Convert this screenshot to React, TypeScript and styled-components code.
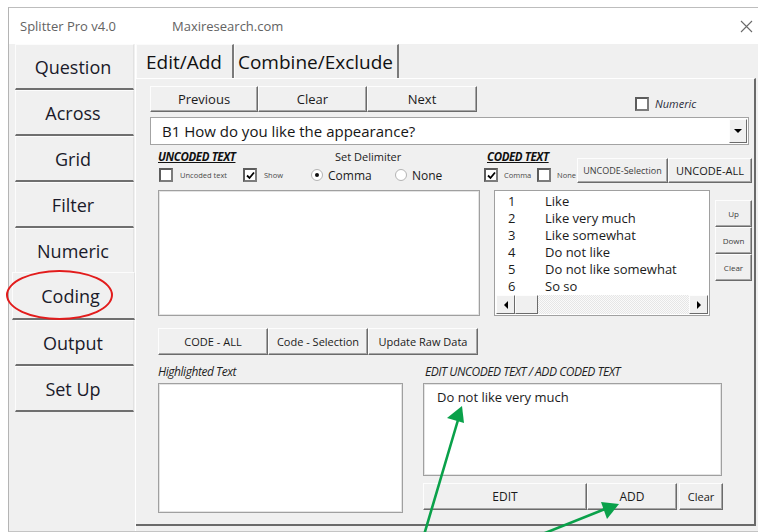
import React from "react";
import styled, { createGlobalStyle } from "styled-components";

const navItems = ["Question", "Across", "Grid", "Filter", "Numeric", "Coding", "Output", "Set Up"];

const codes = [
	["1", "Like"],
	["2", "Like very much"],
	["3", "Like somewhat"],
	["4", "Do not like"],
	["5", "Do not like somewhat"],
	["6", "So so"],
];

const Check = ({ checked }: { checked?: boolean }) => (
	<CheckBox>
		{checked && (
			<svg width="9" height="9" viewBox="0 0 9 9">
				<path d="M1 4.5 L3.5 7 L8 1.5" fill="none" stroke="#000" strokeWidth="1.8" />
			</svg>
		)}
	</CheckBox>
);

const Arrow = ({ dir }: { dir: "left" | "right" | "down" }) => {
	const pts = dir === "left" ? "5,0 5,8 1,4" : dir === "right" ? "1,0 1,8 5,4" : "0,1 8,1 4,5";
	return (
		<svg width={dir === "down" ? 8 : 6} height={dir === "down" ? 6 : 8} viewBox={dir === "down" ? "0 0 8 6" : "0 0 6 8"}>
			<polygon points={pts} fill="#000" />
		</svg>
	);
};

export default function App() {
	return (
		<>
			<GlobalStyle />
			<Desktop>
				<Window>
					<TitleBar>
						<TitleText $w={152}>Splitter Pro v4.0</TitleText>
						<TitleText>Maxiresearch.com</TitleText>
						<Close>
							<svg width="13" height="13" viewBox="0 0 13 13">
								<path d="M1 1 L12 12 M12 1 L1 12" stroke="#6a6a6a" strokeWidth="1.1" />
							</svg>
						</Close>
					</TitleBar>
					<Body>
						<Nav>
							{navItems.map((n) => (
								<NavButton key={n} $active={n === "Coding"}>
									{n}
									{n === "Coding" && <Ring />}
								</NavButton>
							))}
						</Nav>
						<Main>
							<TabStrip>
								<Tab $w={98}>Edit/Add</Tab>
								<Tab $w={165}>Combine/Exclude</Tab>
							</TabStrip>
							<TabPage>
								<TopRow>
									<Button $w={108} $h={26} $size={13}>Previous</Button>
									<Button $w={109} $h={26} $size={13}>Clear</Button>
									<Button $w={110} $h={26} $size={13}>Next</Button>
									<NumericOpt>
										<Check />
										<NumericLabel>Numeric</NumericLabel>
									</NumericOpt>
								</TopRow>

								<Combo>
									<ComboText>B1 How do you like the appearance?</ComboText>
									<DropButton>
										<Arrow dir="down" />
									</DropButton>
								</Combo>

								<OptionsRow>
									<UncodedOpts>
										<HeadRow>
											<SectionTitle $w={177}>UNCODED TEXT</SectionTitle>
											<DelimLabel>Set Delimiter</DelimLabel>
										</HeadRow>
										<ChoiceRow>
											<Choice $w={84} $ml={1}>
												<Check />
												<TinyLabel>Uncoded text</TinyLabel>
											</Choice>
											<Choice $w={68}>
												<Check checked />
												<TinyLabel>Show</TinyLabel>
											</Choice>
											<Choice $w={84}>
												<Radio $on />
												<RadioLabel>Comma</RadioLabel>
											</Choice>
											<Choice>
												<Radio />
												<RadioLabel>None</RadioLabel>
											</Choice>
										</ChoiceRow>
									</UncodedOpts>
									<CodedOpts>
										<HeadRow>
											<SectionTitle $ml={3}>CODED TEXT</SectionTitle>
										</HeadRow>
										<ChoiceRow>
											<Choice $w={53}>
												<Check checked />
												<TinyLabel $gap={6}>Comma</TinyLabel>
											</Choice>
											<Choice>
												<Check />
												<TinyLabel $gap={6}>None</TinyLabel>
											</Choice>
										</ChoiceRow>
									</CodedOpts>
									<UncodeButtons>
										<Button $w={91} $h={25} $size={9}>UNCODE-Selection</Button>
										<Button $w={84} $h={25} $size={11}>UNCODE-ALL</Button>
									</UncodeButtons>
								</OptionsRow>

								<ListsRow>
									<TextBox $w={322} $h={126} />
									<CodedList>
										<CodeRows>
											{codes.map(([num, label]) => (
												<CodeRow key={num}>
													<CodeNum>{num}</CodeNum>
													<span>{label}</span>
												</CodeRow>
											))}
										</CodeRows>
										<HScroll>
											<ScrollButton>
												<Arrow dir="left" />
											</ScrollButton>
											<ScrollThumb />
											<ScrollTrack />
											<ScrollButton>
												<Arrow dir="right" />
											</ScrollButton>
										</HScroll>
									</CodedList>
									<SideButtons>
										<Button $w={37} $h={27} $size={8}>Up</Button>
										<Button $w={37} $h={27} $size={8}>Down</Button>
										<Button $w={37} $h={27} $size={8}>Clear</Button>
									</SideButtons>
								</ListsRow>

								<ActionRow>
									<Button $w={110} $h={27} $size={11}>CODE - ALL</Button>
									<Button $w={100} $h={27} $size={11}>Code - Selection</Button>
									<Button $w={110} $h={27} $size={11}>Update Raw Data</Button>
								</ActionRow>

								<BottomRow>
									<Column $w={245} $mr={20}>
										<FieldLabel>Highlighted Text</FieldLabel>
										<TextBox $w={245} $h={130} />
									</Column>
									<Column $w={300}>
										<FieldLabel $ml={2}>EDIT UNCODED TEXT / ADD CODED TEXT</FieldLabel>
										<TextBox $w={299} $h={93}>
											<EditText>Do not like very much</EditText>
										</TextBox>
										<EditButtons>
											<Button $w={164} $h={27} $size={12}>EDIT</Button>
											<Button $w={90} $h={27} $size={12}>ADD</Button>
											<Button $w={44} $h={27} $size={11} $ml={2}>Clear</Button>
										</EditButtons>
									</Column>
								</BottomRow>
							</TabPage>
						</Main>
					</Body>
				</Window>

				{/* green call-out arrows */}
				<Callouts width="758" height="532" viewBox="0 0 758 532">
					<g stroke="#0aa14a" strokeWidth="2.6" fill="none" strokeLinecap="round">
						<line x1="424" y1="535" x2="458" y2="420" />
						<line x1="540" y1="535" x2="605" y2="509" />
					</g>
					<g fill="#0aa14a">
						<polygon points="462,406 447,418 464,423" />
						<polygon points="619,504 601,502 607,519" />
					</g>
				</Callouts>
			</Desktop>
		</>
	);
}

const GlobalStyle = createGlobalStyle`
* {
	box-sizing: border-box;
}
body {
	margin: 0;
	background: #fff;
	font-family: "Open Sans", "Noto Sans", sans-serif;
	color: #1b1b1b;
}
`;

const Desktop = styled.div`
position: relative;
width: 758px;
height: 532px;
overflow: hidden;
background: #fff;
padding: 7px 0 0 8px;
`;

const Window = styled.div`
width: 751px;
height: 525px;
display: flex;
flex-direction: column;
border-top: 1px solid #bdbdbd;
border-left: 1px solid #b4b4b4;
border-bottom: 1px solid #c4c4c4;
background: #f0f0f0;
`;

const TitleBar = styled.div`
height: 36px;
flex: none;
display: flex;
align-items: center;
padding: 0 6px 0 11px;
background: #fff;
`;

const TitleText = styled.span<{ $w?: number }>`
width: ${(p) => (p.$w ? `${p.$w}px` : "auto")};
font-size: 13px;
color: #636363;
`;

const Close = styled.span`
margin-left: auto;
display: flex;
padding-top: 1px;
`;

const Body = styled.div`
flex: 1;
display: flex;
min-height: 0;
`;

const Nav = styled.div`
width: 127px;
flex: none;
padding-left: 6px;
border-right: 1px solid #fff;
display: flex;
flex-direction: column;
`;

const NavButton = styled.div<{ $active?: boolean }>`
position: relative;
height: ${(p) => (p.$active ? 48 : 46)}px;
width: ${(p) => (p.$active ? 123 : 119)}px;
margin-left: ${(p) => (p.$active ? -3 : 0)}px;
margin-top: ${(p) => (p.$active ? -2 : 0)}px;
display: flex;
align-items: center;
justify-content: center;
padding-right: ${(p) => (p.$active ? 6 : 3)}px;
font-size: 18px;
color: #1a1a2a;
background: #f0f0f0;
border-top: 1px solid #fcfcfc;
border-left: 1px solid #fcfcfc;
border-right: 1px solid #e2e2e2;
border-bottom: 2px solid #6f6f6f;
`;

const Ring = styled.span`
position: absolute;
left: -7px;
top: -3px;
width: 107px;
height: 50px;
border: 2px solid #e21c1c;
border-radius: 50%;
`;

const Main = styled.div`
flex: 1;
display: flex;
flex-direction: column;
`;

const TabStrip = styled.div`
height: 34px;
flex: none;
display: flex;
`;

const Tab = styled.div<{ $w: number }>`
width: ${(p) => p.$w}px;
height: 34px;
display: flex;
align-items: center;
justify-content: center;
padding-right: 1px;
font-size: 19px;
color: #111;
border-top: 1px solid #fbfbfb;
border-left: 1px solid #fbfbfb;
border-right: 2px solid #7a7a7a;
`;

const TabPage = styled.div`
height: 448px;
flex: none;
margin-right: 3px;
padding: 7px 0 0 14px;
border-top: 1px solid #fff;
border-right: 2px solid #6a6a6a;
border-bottom: 2px solid #6a6a6a;
display: flex;
flex-direction: column;
`;

const Button = styled.button<{ $w: number; $h: number; $size: number; $ml?: number }>`
width: ${(p) => p.$w}px;
height: ${(p) => p.$h}px;
margin-left: ${(p) => p.$ml ?? 0}px;
flex: none;
padding: 0;
font-family: "Open Sans", "Noto Sans", sans-serif;
font-size: ${(p) => p.$size}px;
color: ${(p) => (p.$size < 10 ? "#3d3d3d" : "#1b1b1b")};
white-space: nowrap;
background: #f0f0f0;
border: 1px solid;
border-color: #fdfdfd #6b6b6b #6b6b6b #fdfdfd;
box-shadow: inset -1px -1px 0 #a6a6a6;
`;

const TopRow = styled.div`
display: flex;
align-items: flex-start;
height: 26px;
`;

const NumericOpt = styled.div`
display: flex;
align-items: center;
margin: 10px 0 0 158px;
`;

const NumericLabel = styled.span`
margin-left: 6px;
font-size: 11px;
font-style: italic;
color: #2a2a3a;
`;

const CheckBox = styled.span`
width: 14px;
height: 14px;
flex: none;
display: flex;
align-items: center;
justify-content: center;
background: #fff;
border: 2px solid;
border-color: #5c5c5c #7c7c7c #7c7c7c #5c5c5c;
`;

const Combo = styled.div`
margin-top: 5px;
width: 599px;
height: 28px;
display: flex;
align-items: center;
background: #fff;
border: 1px solid #a3a3a3;
padding-right: 1px;
`;

const ComboText = styled.span`
flex: 1;
padding-left: 11px;
font-size: 15px;
color: #161616;
`;

const DropButton = styled.span`
width: 18px;
height: 24px;
display: flex;
align-items: center;
justify-content: center;
background: #f0f0f0;
border: 1px solid;
border-color: #fdfdfd #6b6b6b #6b6b6b #fdfdfd;
`;

const OptionsRow = styled.div`
margin-top: 5px;
padding-left: 8px;
height: 34px;
display: flex;
`;

const UncodedOpts = styled.div`
width: 326px;
display: flex;
flex-direction: column;
`;

const CodedOpts = styled.div`
width: 93px;
display: flex;
flex-direction: column;
`;

const HeadRow = styled.div`
height: 13px;
display: flex;
align-items: center;
`;

const SectionTitle = styled.span<{ $w?: number; $ml?: number }>`
width: ${(p) => (p.$w ? `${p.$w}px` : "auto")};
margin-left: ${(p) => p.$ml ?? 0}px;
font-size: 11.5px;
font-weight: 700;
font-style: italic;
text-decoration: underline;
letter-spacing: -0.4px;
color: #111;
`;

const DelimLabel = styled.span`
font-size: 11px;
color: #222;
`;

const ChoiceRow = styled.div`
margin-top: 3px;
height: 18px;
display: flex;
align-items: center;
`;

const Choice = styled.div<{ $w?: number; $ml?: number }>`
width: ${(p) => (p.$w ? `${p.$w}px` : "auto")};
margin-left: ${(p) => p.$ml ?? 0}px;
display: flex;
align-items: center;
`;

const TinyLabel = styled.span<{ $gap?: number }>`
margin-left: ${(p) => p.$gap ?? 7}px;
font-size: 7.5px;
color: #4a4a4a;
white-space: nowrap;
`;

const Radio = styled.span<{ $on?: boolean }>`
width: 12px;
height: 12px;
flex: none;
border-radius: 50%;
background: #fff;
border: 1px solid #b4b4b4;
display: flex;
align-items: center;
justify-content: center;
&::after {
	content: "";
	display: ${(p) => (p.$on ? "block" : "none")};
	width: 4px;
	height: 4px;
	border-radius: 50%;
	background: #111;
}
`;

const RadioLabel = styled.span`
margin-left: 5px;
font-size: 12px;
color: #1b1b1b;
`;

const UncodeButtons = styled.div`
margin-top: 8px;
display: flex;
`;

const ListsRow = styled.div`
margin-top: 6px;
padding-left: 8px;
display: flex;
align-items: flex-start;
`;

const TextBox = styled.div<{ $w: number; $h: number }>`
width: ${(p) => p.$w}px;
height: ${(p) => p.$h}px;
flex: none;
background: #fff;
border: 1px solid #a0a0a0;
box-shadow: inset 0 0 0 1px #e4e4e4;
`;

const CodedList = styled.div`
margin-left: 14px;
width: 216px;
height: 126px;
display: flex;
flex-direction: column;
background: #fff;
border: 1px solid #a0a0a0;
padding: 1px;
`;

const CodeRows = styled.div`
flex: 1;
padding: 0 0 0 12px;
`;

const CodeRow = styled.div`
height: 17px;
display: flex;
align-items: center;
font-size: 13px;
color: #1b1b1b;
white-space: nowrap;
`;

const CodeNum = styled.span`
width: 37px;
`;

const HScroll = styled.div`
height: 19px;
display: flex;
`;

const ScrollButton = styled.span`
width: 19px;
height: 19px;
display: flex;
align-items: center;
justify-content: center;
background: #f0f0f0;
border: 1px solid;
border-color: #fdfdfd #6b6b6b #6b6b6b #fdfdfd;
`;

const ScrollThumb = styled(ScrollButton)`
width: 23px;
`;

const ScrollTrack = styled.span`
flex: 1;
background-color: #f4f4f4;
background-image: repeating-conic-gradient(#e6e6e6 0 25%, #fafafa 0 50%);
background-size: 2px 2px;
`;

const SideButtons = styled.div`
margin: 10px 0 0 5px;
display: flex;
flex-direction: column;
`;

const ActionRow = styled.div`
margin-top: 12px;
padding-left: 8px;
display: flex;
`;

const BottomRow = styled.div`
margin-top: 11px;
padding-left: 8px;
display: flex;
`;

const Column = styled.div<{ $w: number; $mr?: number }>`
width: ${(p) => p.$w}px;
margin-right: ${(p) => p.$mr ?? 0}px;
display: flex;
flex-direction: column;
`;

const FieldLabel = styled.span<{ $ml?: number }>`
height: 17px;
margin-left: ${(p) => p.$ml ?? 0}px;
font-size: 12px;
line-height: 12px;
font-style: italic;
font-weight: 500;
letter-spacing: -0.45px;
white-space: nowrap;
color: #1f1f1f;
`;

const EditText = styled.div`
padding: 4px 0 0 13px;
font-size: 13px;
color: #1b1b1b;
`;

const EditButtons = styled.div`
margin-top: 7px;
display: flex;
`;

const Callouts = styled.svg`
position: absolute;
left: 0;
top: 0;
pointer-events: none;
`;
